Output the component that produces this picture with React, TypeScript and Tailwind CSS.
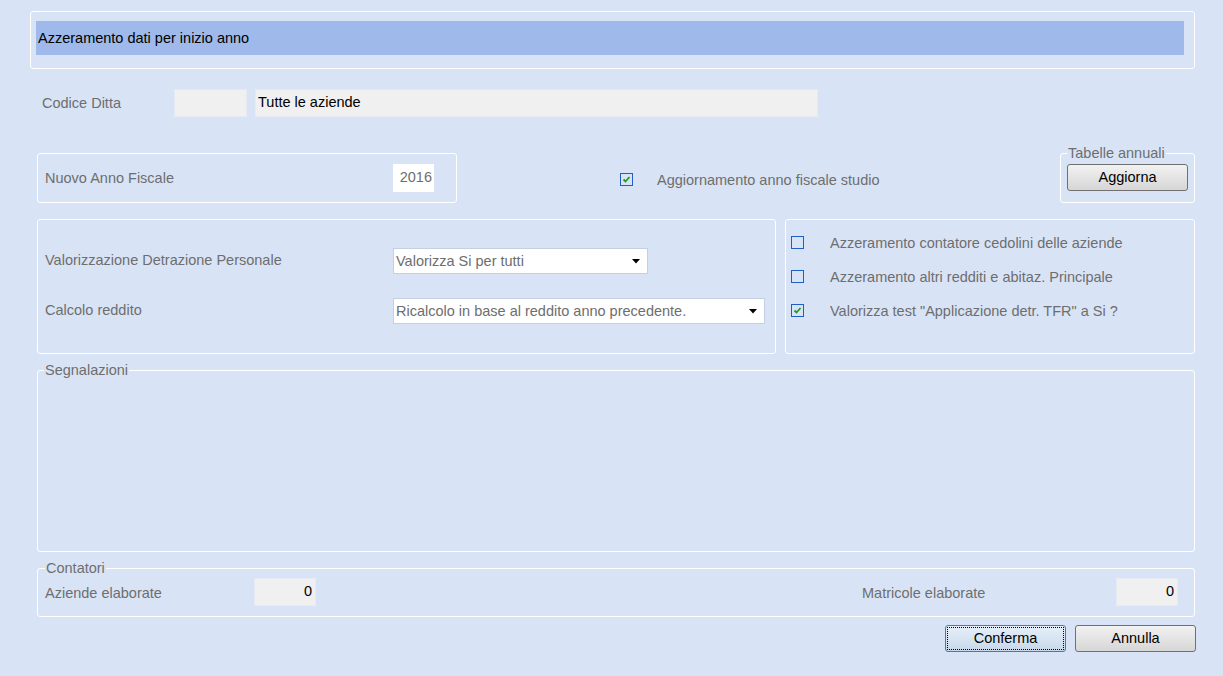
import React from "react";

const label = "text-[14.5px] text-[#6e6e6e] leading-none whitespace-nowrap";
const legend = "px-[1px] text-[14.5px] text-[#6e6e6e] leading-[14px]";
const frame = "border border-white rounded-[3px]";

function Check({ on }: { on?: boolean }) {
  return (
    <div className="w-[13px] h-[13px] border border-[#1f5fc4] flex items-center justify-center shrink-0">
      {on && (
        <svg width="9" height="9" viewBox="0 0 9 9">
          <path d="M1.5 4.5 L3.5 6.5 L7.5 2" stroke="#1e9e1e" strokeWidth="1.8" fill="none" />
        </svg>
      )}
    </div>
  );
}

function Arrow() {
  return (
    <svg width="8" height="5" viewBox="0 0 8 5" className="shrink-0">
      <path d="M0 0 L8 0 L4 4.5 Z" fill="#000" />
    </svg>
  );
}

function WinButton({ text, focus }: { text: string; focus?: boolean }) {
  const skin = focus
    ? "border-[#3c7fb1] bg-gradient-to-b from-[#e6f0fa] to-[#c8d8ea]"
    : "border-[#707070] bg-gradient-to-b from-[#f2f2f2] to-[#d6d6d6]";
  return (
    <div className={`w-[121px] h-[27px] border rounded-[3px] p-[1px] ${skin}`}>
      <div
        className={`w-full h-full flex items-center justify-center text-[14.5px] text-black leading-none ${
          focus ? "border border-dotted border-black" : ""
        }`}
      >
        {text}
      </div>
    </div>
  );
}

export default function App() {
  return (
    <div className="w-full h-[676px] bg-[#d8e4f6] font-['Liberation_Sans',Arial,sans-serif] overflow-hidden">
      {/* titolo */}
      <div className={`mt-[11px] ml-[30px] w-[1165px] h-[58px] ${frame} pt-[9px] pl-[5px]`}>
        <div className="w-[1148px] h-[34px] bg-[#9eb9ea] flex items-center pl-[2px]">
          <span className="text-[14.5px] text-black leading-none">Azzeramento dati per inizio anno</span>
        </div>
      </div>

      {/* codice ditta */}
      <div className="mt-[20px] ml-[42px] flex items-center h-[28px]">
        <span className={`${label} w-[132px]`}>Codice Ditta</span>
        <div className="w-[73px] h-[28px] bg-[#f0f0f0] border border-[#e6ebf3]" />
        <div className="ml-[8px] w-[563px] h-[28px] bg-[#f0f0f0] border border-[#e6ebf3] flex items-center pl-[2px]">
          <span className="text-[14.5px] text-black leading-none -mt-[2px]">Tutte le aziende</span>
        </div>
      </div>

      {/* anno fiscale */}
      <div className="mt-[29px] ml-[37px] flex items-start">
        <div className={`mt-[7px] w-[420px] h-[50px] ${frame} flex items-center pl-[7px]`}>
          <span className={`${label} w-[348px]`}>Nuovo Anno Fiscale</span>
          <div className="w-[41px] h-[28px] bg-white flex items-center justify-end pr-[2px]">
            <span className={`${label} -mt-[2px]`}>2016</span>
          </div>
        </div>
        <div className="ml-[163px] mt-[26px] flex items-center">
          <Check on />
          <span className={`${label} ml-[24px] mt-[1px]`}>Aggiornamento anno fiscale studio</span>
        </div>
        <fieldset className={`ml-auto mr-[28px] w-[135px] h-[57px] ${frame} px-[6px]`}>
          <legend className={legend}>Tabelle annuali</legend>
          <div className="mt-[4px]">
            <WinButton text="Aggiorna" />
          </div>
        </fieldset>
      </div>

      {/* opzioni */}
      <div className="mt-[16px] ml-[37px] flex gap-[9px]">
        <div className={`w-[739px] h-[135px] ${frame} pt-[28px] pl-[7px] flex flex-col gap-[24px]`}>
          <div className="flex items-center h-[26px]">
            <span className={`${label} w-[348px] -mt-[2px]`}>Valorizzazione Detrazione Personale</span>
            <div className="w-[255px] h-[26px] bg-white border border-[#c4cfdf] flex items-center pl-[2px] pr-[7px] justify-between">
              <span className={label}>Valorizza Si per tutti</span>
              <Arrow />
            </div>
          </div>
          <div className="flex items-center h-[26px]">
            <span className={`${label} w-[348px] -mt-[2px]`}>Calcolo reddito</span>
            <div className="w-[372px] h-[26px] bg-white border border-[#c4cfdf] flex items-center pl-[2px] pr-[7px] justify-between">
              <span className={label}>Ricalcolo in base al reddito anno precedente.</span>
              <Arrow />
            </div>
          </div>
        </div>
        <div className={`w-[410px] h-[135px] ${frame} pt-[16px] pl-[5px] flex flex-col gap-[21px]`}>
          {[
            ["Azzeramento contatore cedolini delle aziende", false],
            ["Azzeramento altri redditi e abitaz. Principale", false],
            ['Valorizza test "Applicazione detr. TFR" a Si ?', true],
          ].map(([t, on]) => (
            <div key={t as string} className="flex items-center h-[13px]">
              <Check on={on as boolean} />
              <span className={`${label} ml-[26px] mt-[2px]`}>{t as string}</span>
            </div>
          ))}
        </div>
      </div>

      {/* segnalazioni */}
      <fieldset className={`mt-[9px] ml-[37px] w-[1158px] h-[189px] ${frame}`}>
        <legend className={`ml-[6px] ${legend}`}>Segnalazioni</legend>
      </fieldset>

      {/* contatori */}
      <fieldset className={`mt-[9px] ml-[37px] w-[1158px] h-[56px] ${frame} pl-[7px]`}>
        <legend className={legend}>Contatori</legend>
        <div className="mt-[3px] flex items-center h-[28px]">
          <span className={`${label} w-[209px] mt-[2px]`}>Aziende elaborate</span>
          <div className="w-[62px] h-[28px] bg-[#f0f0f0] border border-[#e6ebf3] flex items-center justify-end pr-[3px]">
            <span className="text-[14.5px] text-black leading-none -mt-[2px]">0</span>
          </div>
          <span className={`${label} ml-[546px] w-[254px] mt-[2px]`}>Matricole elaborate</span>
          <div className="w-[62px] h-[28px] bg-[#f0f0f0] border border-[#e6ebf3] flex items-center justify-end pr-[3px]">
            <span className="text-[14.5px] text-black leading-none -mt-[2px]">0</span>
          </div>
        </div>
      </fieldset>

      {/* pulsanti */}
      <div className="mt-[8px] ml-[945px] flex gap-[9px]">
        <WinButton text="Conferma" focus />
        <WinButton text="Annulla" />
      </div>
    </div>
  );
}
